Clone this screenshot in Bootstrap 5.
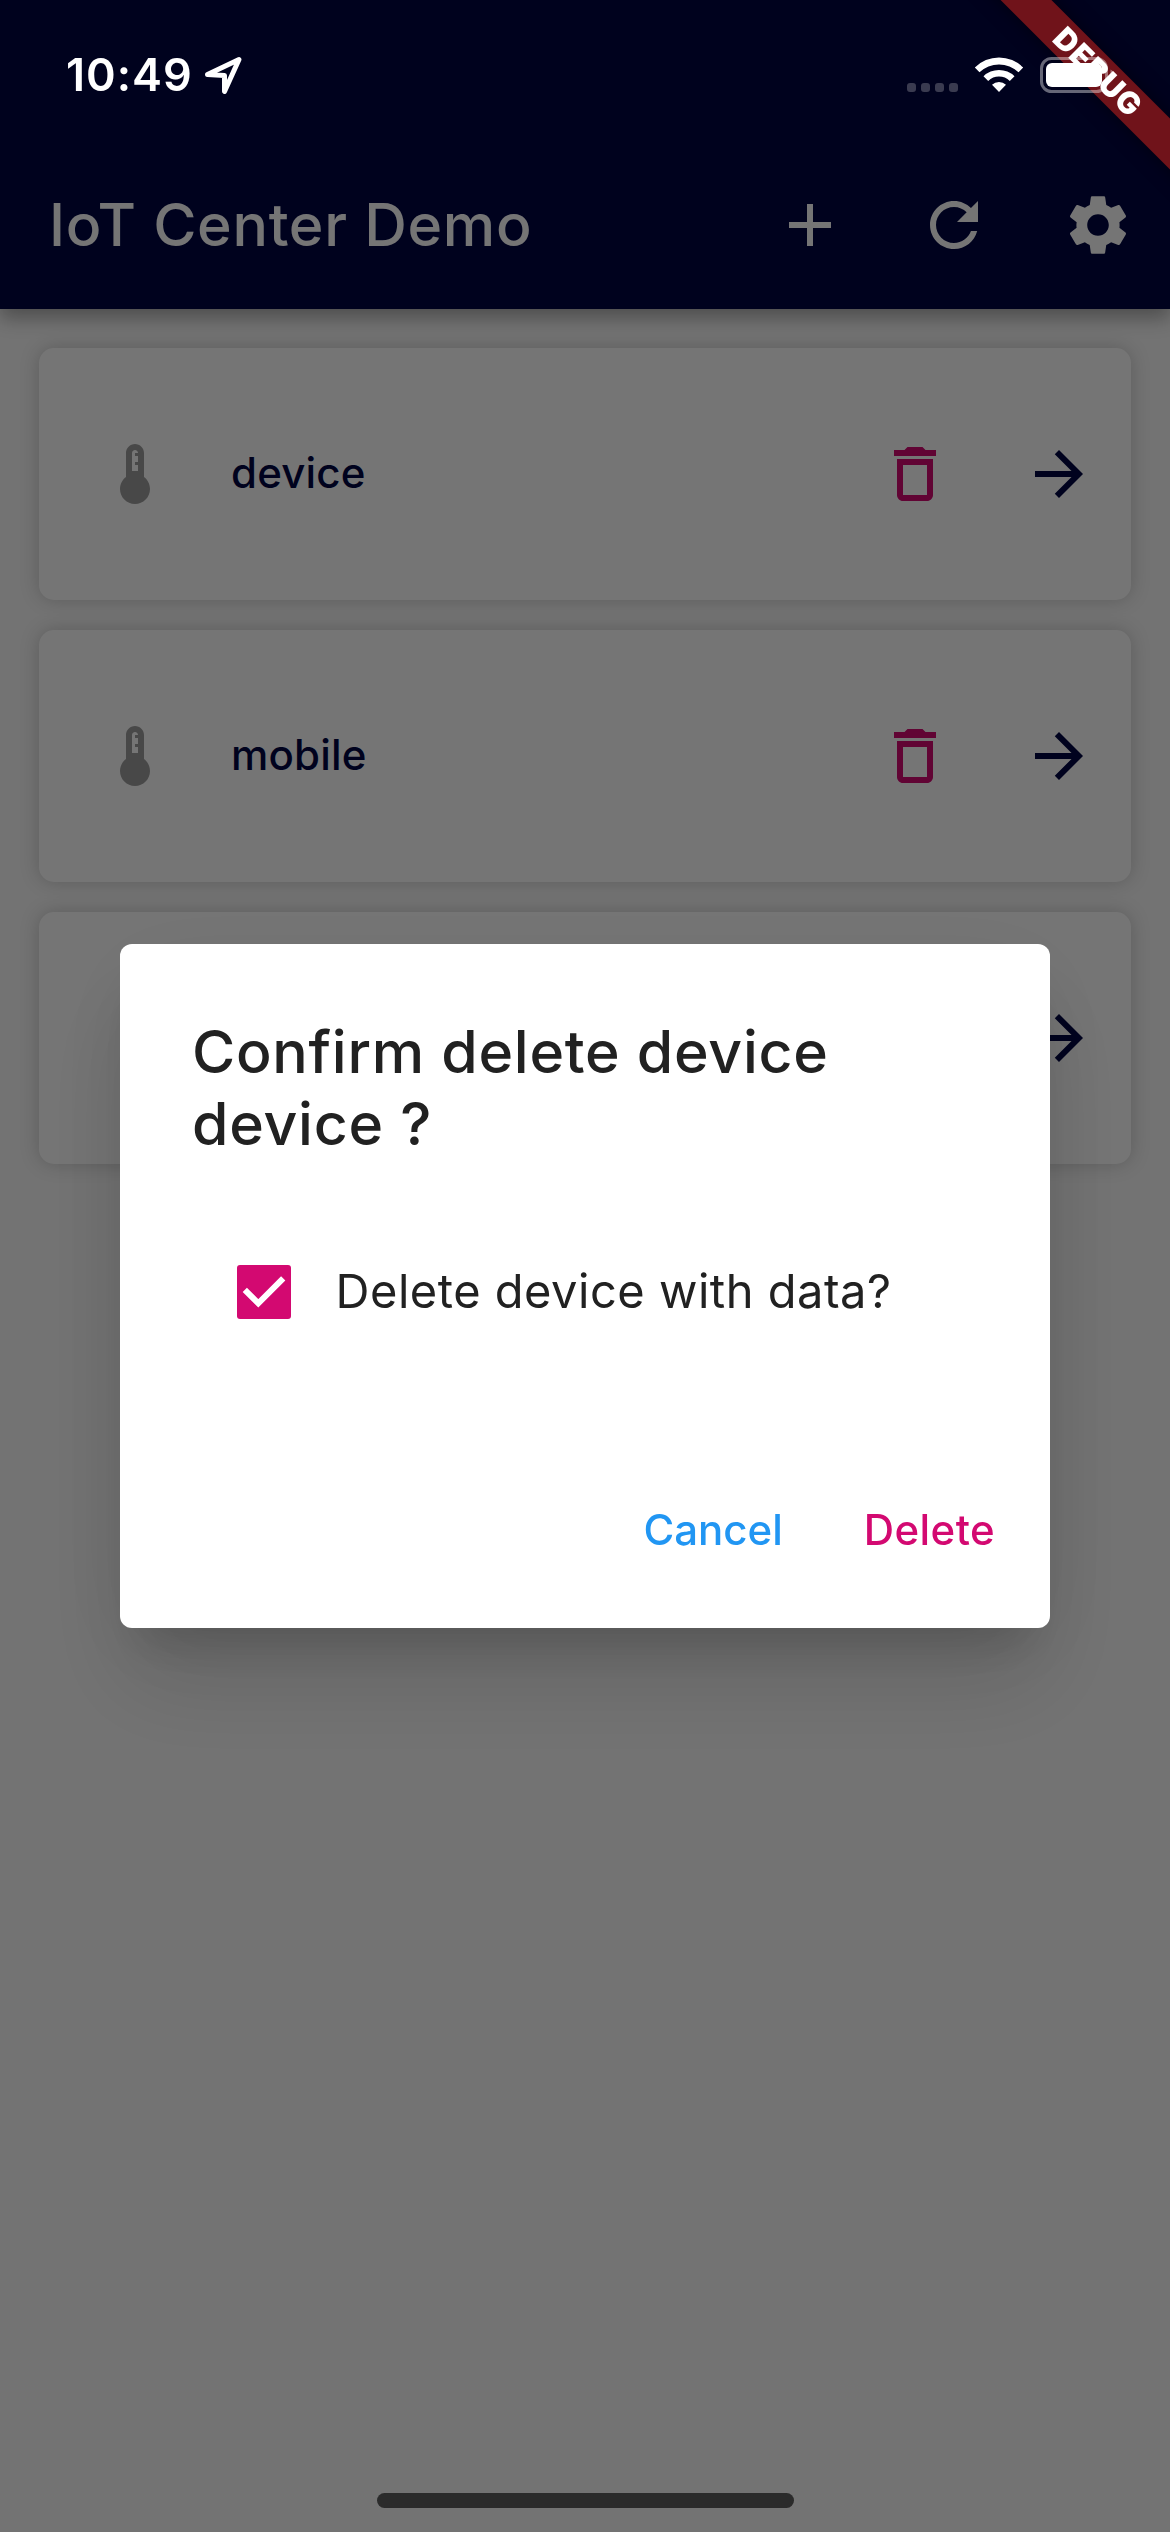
<!DOCTYPE html>
<html lang="en">
<head>
<meta charset="utf-8">
<meta name="viewport" content="width=device-width, initial-scale=1">
<title>IoT Center Demo</title>
<link rel="stylesheet" href="https://cdn.jsdelivr.net/npm/bootstrap@5.3.0/dist/css/bootstrap.min.css">
<style>
  html, body { height: 100%; overflow: hidden; }
  body { background: #fafafa; font-family: Inter, "Liberation Sans", sans-serif; color: #212121; }
  svg { display: block; fill: currentColor; }
  .glyph { width: 72px; height: 72px; flex: none; }
  .tap { width: 144px; height: 144px; padding: 0; border: 0; border-radius: 0; }
  .app-header { height: 309px; padding: 141px 0 0 49px; background: #010643; box-shadow: 0 9px 18px rgba(0,0,0,.32); position: relative; }
  .app-title { font-size: 59px; font-weight: 500; letter-spacing: .7px; line-height: 72px; color: #fff; }
  .device-list { padding: 39px; gap: 30px; }
  .device { height: 252px; border: 0; border-radius: 15px; box-shadow: 0 0 20px rgba(0,0,0,.2); padding-left: 60px; background: #fff; }
  .device-name { font-size: 42px; font-weight: 450; line-height: 54px; color: #010643; padding: 0 0 2px 60px; letter-spacing: .2px; }
  .text-temp { color: #9e9e9e; }
  .text-navy { color: #010643; }
  .text-pink, .text-pink.btn { color: #d30971; }
  .text-sky, .text-sky.btn { color: #2196f3; }
  .scrim { background: rgba(0,0,0,.54); padding: 141px 0 102px; }
  .confirm-dialog { width: 930px; max-width: 930px; min-height: 100%; margin: 0 auto; }
  .confirm-box { height: 684px; border: 0; border-radius: 12px; padding-top: 72px; color: #212121; box-shadow: 0 33px 45px -21px rgba(0,0,0,.15), 0 60px 100px 0 rgba(0,0,0,.11), 0 20px 100px 0 rgba(0,0,0,.07); }
  .confirm-title { font-size: 59px; font-weight: 500; line-height: 72px; padding: 0 72px; letter-spacing: .72px; }
  .confirm-option { padding: 105px 0 0 117px; }
  .tick { width: 54px; height: 54px; border-radius: 3px; background: #d30971; }
  .tick path { fill: none; stroke: #fff; stroke-width: 6; }
  .option-label { font-size: 47px; line-height: 52px; margin-left: 44.6px; padding-bottom: 2px; letter-spacing: .51px; }
  .confirm-actions { padding: 0 55px 68px 0; gap: 81px; }
  .action { font-size: 42px; font-weight: 500; line-height: 60px; padding: 0; border: 0; }
  .action.text-pink { letter-spacing: .4px; }
  .status-bar { height: 141px; z-index: 1070; color: #fff; padding: 0 55px 0 66px; }
  .clock { font-size: 45px; font-weight: 600; line-height: 54px; letter-spacing: 1px; }
  .cell-dot { width: 9px; height: 9px; border-radius: 3px; background: #3a3b50; }
  .ribbon-area { position: absolute; top: 0; right: 0; width: 260px; height: 260px; overflow: hidden; z-index: 1065; }
  .ribbon { position: absolute; left: -12px; top: 54px; width: 400px; height: 36px; line-height: 36px; transform: rotate(45deg); background: #70131a; color: #fff; font-size: 30.6px; font-weight: 900; letter-spacing: .9px; text-align: center; box-shadow: 0 0 18px rgba(0,0,0,.5); }
  .home-bar { position: fixed; bottom: 24px; left: 377px; width: 417px; height: 15px; border-radius: 8px; background: #2b2b2b; z-index: 1070; }
</style>
<script src="https://cdn.jsdelivr.net/npm/bootstrap@5.3.0/dist/js/bootstrap.bundle.min.js"></script>
</head>
<body>
<svg class="d-none">
  <symbol id="i-temp" viewBox="0 0 24 24"><path d="M15 13V5c0-1.66-1.34-3-3-3S9 3.34 9 5v8c-1.21.91-2 2.37-2 4 0 2.76 2.24 5 5 5s5-2.24 5-5c0-1.63-.79-3.09-2-4zm-4-2V5c0-.55.45-1 1-1s1 .45 1 1h-1v1h1v2h-1v1h1v2h-2z"/></symbol>
  <symbol id="i-delete" viewBox="0 0 24 24"><path d="M6 19c0 1.1.9 2 2 2h8c1.1 0 2-.9 2-2V7H6v12zM8 9h8v10H8V9zM15.5 4l-1-1h-5l-1 1H5v2h14V4z"/></symbol>
  <symbol id="i-forward" viewBox="0 0 24 24"><path d="M12 4l-1.41 1.41L16.17 11H4v2h12.17l-5.58 5.59L12 20l8-8z"/></symbol>
</svg>

<header class="app-header d-flex align-items-center">
  <span class="app-title me-auto">IoT Center Demo</span>
  <button class="btn tap text-white d-flex align-items-center justify-content-center" aria-label="Add"><svg class="glyph" viewBox="0 0 24 24"><path d="M19 13h-6v6h-2v-6H5v-2h6V5h2v6h6z"/></svg></button>
  <button class="btn tap text-white d-flex align-items-center justify-content-center" aria-label="Refresh"><svg class="glyph" viewBox="0 0 24 24"><path d="M17.65 6.35C16.2 4.9 14.21 4 12 4c-4.42 0-7.99 3.58-7.99 8s3.57 8 7.99 8c3.73 0 6.84-2.55 7.73-6h-2.08c-.82 2.33-3.04 4-5.65 4-3.31 0-6-2.69-6-6s2.69-6 6-6c1.66 0 3.14.69 4.22 1.78L13 11h7V4l-2.35 2.35z"/></svg></button>
  <button class="btn tap text-white d-flex align-items-center justify-content-center" aria-label="Settings"><svg class="glyph" viewBox="0 0 24 24"><path d="M19.14 12.94c.04-.3.06-.61.06-.94 0-.32-.02-.64-.07-.94l2.03-1.58c.18-.14.23-.41.12-.61l-1.92-3.32c-.12-.22-.37-.29-.59-.22l-2.39.96c-.5-.38-1.03-.7-1.62-.94l-.36-2.54c-.04-.24-.24-.41-.48-.41h-3.84c-.24 0-.43.17-.47.41l-.36 2.54c-.59.24-1.13.57-1.62.94l-2.39-.96c-.22-.08-.47 0-.59.22L2.74 8.87c-.12.21-.08.47.12.61l2.03 1.58c-.05.3-.09.63-.09.94s.02.64.07.94l-2.03 1.58c-.18.14-.23.41-.12.61l1.92 3.32c.12.22.37.29.59.22l2.39-.96c.5.38 1.03.7 1.62.94l.36 2.54c.05.24.24.41.48.41h3.84c.24 0 .44-.17.47-.41l.36-2.54c.59-.24 1.13-.56 1.62-.94l2.39.96c.22.08.47 0 .59-.22l1.92-3.32c.12-.22.07-.47-.12-.61l-2.01-1.58zM12 15.6c-1.98 0-3.6-1.62-3.6-3.6s1.62-3.6 3.6-3.6 3.6 1.62 3.6 3.6-1.62 3.6-3.6 3.6z"/></svg></button>
</header>

<main class="device-list d-flex flex-column">
  <div class="card device flex-row align-items-center">
    <svg class="glyph text-temp"><use href="#i-temp"/></svg>
    <span class="device-name me-auto">device</span>
    <button class="btn tap text-pink d-flex align-items-center justify-content-center" aria-label="Delete device"><svg class="glyph"><use href="#i-delete"/></svg></button>
    <button class="btn tap text-navy d-flex align-items-center justify-content-center" aria-label="Open device"><svg class="glyph"><use href="#i-forward"/></svg></button>
  </div>
  <div class="card device flex-row align-items-center">
    <svg class="glyph text-temp"><use href="#i-temp"/></svg>
    <span class="device-name me-auto">mobile</span>
    <button class="btn tap text-pink d-flex align-items-center justify-content-center" aria-label="Delete mobile"><svg class="glyph"><use href="#i-delete"/></svg></button>
    <button class="btn tap text-navy d-flex align-items-center justify-content-center" aria-label="Open mobile"><svg class="glyph"><use href="#i-forward"/></svg></button>
  </div>
  <div class="card device flex-row align-items-center">
    <svg class="glyph text-temp"><use href="#i-temp"/></svg>
    <button class="btn tap text-pink d-flex align-items-center justify-content-center ms-auto" aria-label="Delete"><svg class="glyph"><use href="#i-delete"/></svg></button>
    <button class="btn tap text-navy d-flex align-items-center justify-content-center" aria-label="Open"><svg class="glyph"><use href="#i-forward"/></svg></button>
  </div>
</main>

<div class="modal d-block scrim" role="dialog">
  <div class="modal-dialog modal-dialog-centered confirm-dialog">
    <div class="modal-content confirm-box">
      <div class="confirm-title">Confirm delete device device ?</div>
      <div class="confirm-option d-flex align-items-center">
        <svg class="tick" viewBox="0 0 54 54"><path d="M7.8 24.8 21.3 38.3 46.2 13.4"/></svg>
        <span class="option-label">Delete device with data?</span>
      </div>
      <div class="confirm-actions d-flex justify-content-end mt-auto">
        <button class="btn action text-sky">Cancel</button>
        <button class="btn action text-pink">Delete</button>
      </div>
    </div>
  </div>
</div>

<div class="ribbon-area"><div class="ribbon">DEBUG</div></div>

<div class="status-bar fixed-top d-flex align-items-center">
  <span class="clock mt-2">10:49</span>
  <svg class="ms-2 mt-2" width="44" height="44" viewBox="0 0 44 44"><path d="M6.500 21.500 38 6.500 23.500 38.500V22.500Z" fill="none" stroke="#fff" stroke-width="5" stroke-linejoin="round"/></svg>
  <div class="ms-auto d-flex align-items-center mt-2">
    <div class="d-flex me-3" style="gap:5px;padding-top:25px"><i class="cell-dot"></i><i class="cell-dot"></i><i class="cell-dot"></i><i class="cell-dot"></i></div>
    <svg width="50" height="37" viewBox="0 0 50 37"><path d="M.8 11.500A34 34 0 0 1 49.200 11.500L44.500 16.300A28 28 0 0 0 5.500 16.300ZM9.500 20.300A22 22 0 0 1 40.500 20.300L35.800 25A15.500 15.500 0 0 0 14.200 25ZM18 28.800A10 10 0 0 1 32 28.800L25 36Z"/></svg>
    <svg class="ms-3" width="75" height="36" viewBox="0 0 75 36"><rect x="1.500" y="1.500" width="65" height="33" rx="10" fill="none" stroke="#fff" stroke-opacity=".4" stroke-width="3"/><rect x="6" y="6" width="56" height="24" rx="6"/><path d="M70.500 12.500Q74 14 74 18T70.500 23.500Z" fill-opacity=".4"/></svg>
  </div>
</div>
<div class="home-bar"></div>
</body>
</html>
